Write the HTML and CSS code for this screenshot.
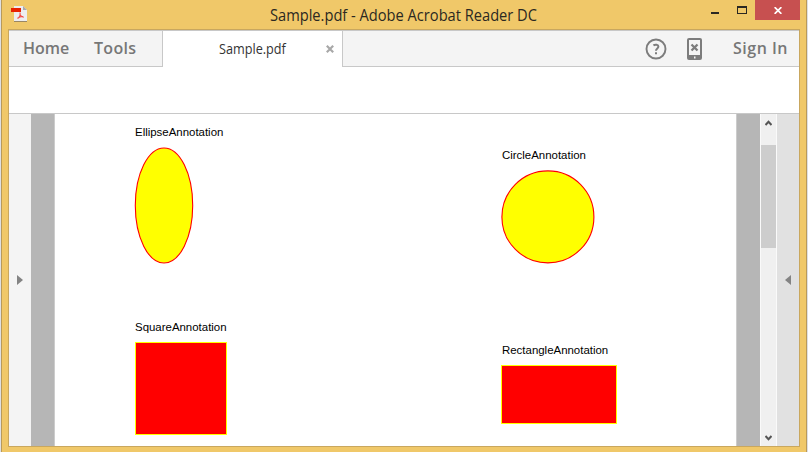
FILE: index.html
```html
<!DOCTYPE html>
<html lang="en">
<head>
<meta charset="utf-8">
<title>Sample.pdf - Adobe Acrobat Reader DC</title>
<link rel="stylesheet" href="styles.css">
</head>
<body>
<div class="window">
  <header class="titlebar">
    <svg class="app-icon" width="17" height="17" viewBox="0 0 17 17">
      <path d="M3 0h9l4 4v12H3z" fill="#ededf0"/>
      <path d="M12 0l4 4h-4z" fill="#a9a9a9"/>
      <path d="M3 15.500h13" stroke="#9a8763" stroke-width="1"/>
      <path d="M0 2h10v4H0z" fill="#e92200"/>
      <path d="M9 6.500C9.500 9 8.500 11.500 6.500 12.500M8.800 8.500q1 2.200 4 2.800M6.500 12.300q2.500-2 5.500-1.800" fill="none" stroke="#f2504b" stroke-width="1.100"/>
    </svg>
    <h1 class="title"><span>Sample.pdf - Adobe Acrobat Reader DC</span></h1>
    <div class="controls">
      <svg width="51" height="20" viewBox="0 0 51 20" shape-rendering="crispEdges"><path d="M7 12h8v2H7zM33 6h10v8H33zM34 8v5h8V8z" fill="#2a2722" fill-rule="evenodd"/></svg>
      <div class="close"><svg width="8" height="7" viewBox="0 0 8 7"><path d="M.6.200L7.400 6.800M7.400.2L.6 6.800" stroke="#fff" stroke-width="1.800"/></svg></div>
    </div>
  </header>
  <main class="client">
    <nav class="tabs">
      <div class="menu"><span class="home">Home</span><span class="tools">Tools</span></div>
      <div class="tab"><span class="tab-name">Sample.pdf</span><svg width="8" height="8" viewBox="0 0 8 8"><path d="M.8.800l6.400 6.400M7.200.8L.8 7.200" stroke="#a8a8a8" stroke-width="2.200"/></svg></div>
      <div class="account">
        <svg class="help" width="22" height="22" viewBox="0 0 22 22" fill="none" stroke="#7c7c7c"><circle cx="11" cy="11" r="9.500" stroke-width="1.900"/><path d="M8.400 7.400c1.700-1.200 5-1 5 1.200 0 1.800-2.400 1.900-2.400 4.200" stroke-width="2"/><path d="M11 14.300v2" stroke-width="2"/></svg>
        <svg class="mobile" width="15" height="22" viewBox="0 0 15 22"><path d="M2 0h11q2 0 2 2v18q0 2-2 2H2q-2 0-2-2V2Q0 0 2 0zm0 2v15h11V2zM7 18.500v2h1.500v-2z" fill="#7c7c7c" fill-rule="evenodd"/><path d="M4.500 6.500l6 6M10.500 6.500l-6 6" stroke="#7c7c7c" stroke-width="2.300"/></svg>
        <span class="sign">Sign In</span>
      </div>
    </nav>
    <div class="toolbar"></div>
    <section class="workspace">
      <div class="rail"><svg width="6" height="10" viewBox="0 0 6 10"><path d="M0 0l6 5-6 5z" fill="#838383"/></svg></div>
      <div class="gutter"></div>
      <article class="page">
        <figure class="note ellipse"><figcaption>EllipseAnnotation</figcaption>
          <svg width="60" height="118" viewBox="0 0 60 118"><ellipse cx="30" cy="58.500" rx="28.700" ry="57.500" fill="#ff0" stroke="red" stroke-width="1.100"/></svg></figure>
        <figure class="note circle"><figcaption>CircleAnnotation</figcaption>
          <svg width="95" height="95" viewBox="0 0 95 95"><circle cx="46.900" cy="46.900" r="46" fill="#ff0" stroke="red" stroke-width="1.100"/></svg></figure>
        <figure class="note square"><figcaption>SquareAnnotation</figcaption><div class="box"></div></figure>
        <figure class="note rectangle"><figcaption>RectangleAnnotation</figcaption><div class="box"></div></figure>
      </article>
      <div class="gutter"></div>
      <div class="scroll">
        <svg width="7" height="6" viewBox="0 0 7 6"><path d="M.5 5L3.500 1.800 6.500 5" fill="none" stroke="#555" stroke-width="2"/></svg>
        <div class="thumb"></div>
        <svg class="down" width="7" height="6" viewBox="0 0 7 6"><path d="M.5 1L3.500 4.200 6.500 1" fill="none" stroke="#555" stroke-width="2"/></svg>
      </div>
      <div class="rail right"><svg width="6" height="10" viewBox="0 0 6 10"><path d="M6 0L0 5l6 5z" fill="#838383"/></svg></div>
    </section>
  </main>
</div>
</body>
</html>
```
FILE: styles.css
```css
* { box-sizing: border-box; }
body { margin: 0; width: 808px; height: 452px; overflow: hidden; background: #dedfe3; font-family: "Open Sans", sans-serif; }
svg { display: block; flex: none; }
.window { width: 806px; height: 452px; margin-left: 1px; background: #f0c869; border: solid #b89a5b; border-width: 0 1px; padding: 0 6px 5px; }
.titlebar { height: 29px; display: flex; align-items: flex-start; }
.app-icon { margin: 6px 0 0 3px; }
.title { margin: 0; flex: 1; width: 0; padding: 4px 0 0 242px; font-size: 16px; line-height: 22px; font-weight: 400; color: #2b2822; white-space: nowrap; }
.title span { display: inline-block; transform: scaleX(.915); transform-origin: 0 0; }
.controls { display: flex; }
.close { width: 45px; height: 20px; background: #c75050; padding: 7px 0 0 19px; }
.client { width: 792px; height: 418px; border: 1px solid #c9a75e; display: flex; flex-direction: column; background: #fff; }
.tabs { height: 37px; display: flex; border-top: 1px solid #c8c8c8; flex: none; }
.menu { width: 154px; background: #f4f4f4; border: solid #c8c8c8; border-width: 0 1px 1px 0; display: flex; padding-left: 14px; }
.menu span, .sign { font-size: 16px; line-height: 35px; font-weight: 600; color: #777; white-space: nowrap; }
.home { width: 71px; }
.menu .tools { letter-spacing: .3px; }
.tab { width: 179px; display: flex; align-items: center; padding-left: 56px; }
.tab-name { width: 107px; font-size: 14px; line-height: 36px; color: #333; transform: scaleX(.905); transform-origin: 0 0; }
.account { flex: 1; background: #f4f4f4; border: solid #c8c8c8; border-width: 0 0 1px 1px; display: flex; align-items: flex-start; }
.help { margin: 7px 0 0 302px; }
.mobile { margin: 7px 0 0 20px; }
.sign { margin-left: 31px; letter-spacing: .5px; }
.toolbar { height: 47px; flex: none; border-bottom: 1px solid #c8c8c8; }
.workspace { flex: 1; display: flex; }
.rail { width: 22px; background: #f4f4f4; padding: 161px 0 0 8px; }
.rail.right { background: #e1e1e1; }
.gutter { width: 23px; background: #b6b6b6; }
.page { width: 683px; border: solid #ccc; border-width: 0 1px; position: relative; background: #fff; overflow: hidden; }
.note { position: absolute; margin: 0; font: 11.45px/14px "Liberation Sans", sans-serif; color: #000; }
.note figcaption { white-space: nowrap; padding-left: 1px; }
.ellipse { left: 79px; top: 11px; }
.ellipse svg { margin-top: 8px; }
.circle { left: 446px; top: 34px; }
.circle svg { margin-top: 8px; }
.square { left: 80px; top: 206px; }
.rectangle { left: 446px; top: 229px; }
.square figcaption { padding-left: 0; }
.box { background: red; border: 1px solid #ff0; }
.square .box { width: 92px; height: 93px; margin-top: 8px; }
.rectangle .box { width: 116px; height: 59px; margin-top: 8px; }
.scroll { width: 17px; border: solid #fafafa; border-width: 0 1px; background: #f0f0f0; display: flex; flex-direction: column; }
.scroll svg { margin: 6px 0 0 4px; }
.thumb { height: 103px; margin-top: 19px; background: #cdcdcd; }
.scroll .down { margin: auto 0 5px 4px; }
```
